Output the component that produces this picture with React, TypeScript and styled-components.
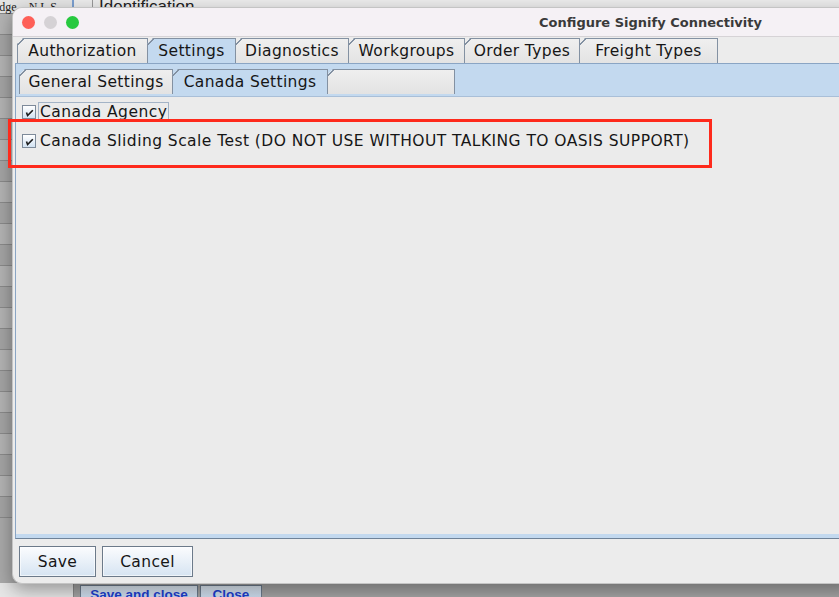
import React from 'react';
import styled, { createGlobalStyle, css } from 'styled-components';

const GlobalStyle = createGlobalStyle`
	html, body {
		margin: 0;
		padding: 0;
		width: 839px;
		height: 597px;
		overflow: hidden;
		background: #dcdcdc;
	}
	* {
		box-sizing: border-box;
	}
`;

const topTabs = [
	{ label: 'Authorization', width: 131 },
	{ label: 'Settings', width: 89, active: true },
	{ label: 'Diagnostics', width: 114 },
	{ label: 'Workgroups', width: 117 },
	{ label: 'Order Types', width: 116 },
	{ label: 'Freight Types', width: 139 },
];

const innerTabs = [
	{ label: 'General Settings', width: 154 },
	{ label: 'Canada Settings', width: 156, active: true },
	{ label: '', width: 128 },
];

const CheckMark = () => (
	<svg width="11" height="11" viewBox="0 0 11 11">
		<path d="M2.5 5.5 L3.6 8.6 L8.8 3.2" fill="none" stroke="#1b1b1b" strokeWidth="1.6" />
	</svg>
);

export default function App() {
	return (
		<>
			<GlobalStyle />
			<Desktop>
				<BackTable>
					<BackHeader>
						<span>idge</span>
						<span>N L S</span>
					</BackHeader>
					{Array.from({ length: 24 }).map((_, i) => (
						<BackRow key={i} />
					))}
				</BackTable>
				<BackMain>
					<BackLegend>Identification</BackLegend>
				</BackMain>
				<BackFooterLeft />
				<BackFooter>
					<BackButton $width={118}>Save and close</BackButton>
					<BackButton $width={62}>Close</BackButton>
				</BackFooter>

				<Window>
					<TitleBar>
						<Lights>
							<Light color="#fe5f57" />
							<Light color="#d5d2d5" />
							<Light color="#27c93f" />
						</Lights>
						<Title>Configure Signify Connectivity</Title>
					</TitleBar>
					<WindowBody>
						<TabRow>
							{topTabs.map((t) => (
								<Tab key={t.label} $width={t.width} $active={!!t.active}>
									{t.label}
								</Tab>
							))}
						</TabRow>
						<OuterPanel>
							<InnerTabRow>
								{innerTabs.map((t, i) => (
									<Tab key={i} $width={t.width} $active={!!t.active}>
										{t.label}
									</Tab>
								))}
							</InnerTabRow>
							<InnerPanel>
								<CheckRow>
									<CheckBox>
										<CheckMark />
									</CheckBox>
									<CheckLabel $focused>Canada Agency</CheckLabel>
								</CheckRow>
								<CheckRow>
									<CheckBox>
										<CheckMark />
									</CheckBox>
									<CheckLabel>
										Canada Sliding Scale Test (DO NOT USE WITHOUT TALKING TO OASIS SUPPORT)
									</CheckLabel>
								</CheckRow>
							</InnerPanel>
						</OuterPanel>
						<ButtonBar>
							<Button $width={77}>Save</Button>
							<Button $width={91}>Cancel</Button>
						</ButtonBar>
					</WindowBody>
				</Window>

				<Highlight />
			</Desktop>
		</>
	);
}

const uiFont = `'DejaVu Sans', 'Noto Sans', sans-serif`;

const Desktop = styled.div`
	position: relative;
	width: 839px;
	height: 597px;
	display: grid;
	grid-template-columns: 74px 1fr;
	grid-template-rows: 1fr 14px;
	background: #dcdcdc;
	overflow: hidden;
`;

const BackTable = styled.div`
	grid-column: 1;
	grid-row: 1;
	display: flex;
	flex-direction: column;
	background: #a9a9a9;
	border-right: 2px solid #7b9fd0;
`;

const BackHeader = styled.div`
	height: 14px;
	display: flex;
	gap: 12px;
	align-items: flex-end;
	background: #e4e4e4;
	font-family: 'Liberation Serif', serif;
	font-size: 12px;
	line-height: 12px;
	color: #222;
	border-bottom: 1px solid #888;
	span:first-child {
		margin-left: -4px;
	}
`;

const BackRow = styled.div`
	height: 21px;
	flex: none;
	border-bottom: 1px solid #8a8a8a;
	background: #b3b3b3;
	&:nth-child(odd) {
		background: #a4a4a4;
	}
`;

const BackMain = styled.div`
	grid-column: 2;
	grid-row: 1;
	background: #ececec;
	padding-left: 18px;
`;

const BackLegend = styled.div`
	font-family: 'Liberation Sans', sans-serif;
	font-size: 17px;
	line-height: 14px;
	color: #222;
	height: 8px;
	overflow: visible;
	border-left: 1px solid #999;
	padding-left: 6px;
`;

const BackFooterLeft = styled.div`
	grid-column: 1;
	grid-row: 2;
	background: #e6e6e6;
	border-right: 1px solid #8a8a8a;
`;

const BackFooter = styled.div`
	grid-column: 2;
	grid-row: 2;
	background: #a3a3a3;
	display: flex;
	align-items: flex-start;
	padding: 2px 0 0 6px;
	gap: 2px;
`;

const BackButton = styled.div<{ $width: number }>`
	width: ${({ $width }) => $width}px;
	height: 20px;
	text-align: center;
	background: linear-gradient(#dfe9f4, #bcd0e6);
	border: 1px solid #6c7b8c;
	font-family: 'Liberation Sans', sans-serif;
	font-size: 13.5px;
	line-height: 18px;
	font-weight: bold;
	color: #1d3fd0;
	text-decoration: underline;
`;

const Window = styled.div`
	position: absolute;
	left: 12px;
	top: 7px;
	width: 840px;
	height: 577px;
	display: flex;
	flex-direction: column;
	border-radius: 10px 0 0 10px;
	border: 1px solid #c4c4c4;
	border-right: none;
	background: #ececec;
	box-shadow: 0 6px 18px rgba(0, 0, 0, 0.35);
	overflow: hidden;
`;

const TitleBar = styled.div`
	height: 29px;
	flex: none;
	display: flex;
	align-items: center;
	background: #f5f1f5;
	border-bottom: 1px solid #d6d3d6;
	position: relative;
`;

const Lights = styled.div`
	display: flex;
	gap: 9px;
	padding-left: 9px;
`;

const Light = styled.span<{ color: string }>`
	width: 13px;
	height: 13px;
	border-radius: 50%;
	background: ${({ color }) => color};
`;

const Title = styled.div`
	margin-left: auto;
	margin-right: 90px;
	font-family: ${uiFont};
	font-size: 13px;
	font-weight: bold;
	color: #3a3a3a;
`;

const WindowBody = styled.div`
	flex: 1;
	display: flex;
	flex-direction: column;
	padding-left: 2px;
`;

const TabRow = styled.div`
	height: 25px;
	flex: none;
	display: flex;
	padding-left: 2px;
	margin-top: 1px;
`;

const Tab = styled.div<{ $width: number; $active: boolean }>(
	({ $width, $active }) => css`
		position: relative;
		width: ${$width}px;
		height: 100%;
		flex: none;
		display: flex;
		align-items: center;
		justify-content: center;
		font-family: ${uiFont};
		font-size: 15.5px;
		letter-spacing: 0.35px;
		color: #161616;
		white-space: nowrap;
		border: 1px solid #8391a2;
		border-bottom: none;
		background: ${$active ? '#c3d9ef' : 'linear-gradient(#efefef, #e3e3e3)'};
		margin-left: -1px;
		z-index: ${$active ? 2 : 1};
		clip-path: polygon(6px 0, 100% 0, 100% 100%, 0 100%, 0 6px);
		&::before {
			content: '';
			position: absolute;
			left: -1px;
			top: -1px;
			width: 8px;
			height: 8px;
			background: linear-gradient(
				to bottom right,
				transparent calc(50% - 1px),
				#8391a2 calc(50% - 1px),
				#8391a2 calc(50% + 0.2px),
				transparent calc(50% + 0.2px)
			);
		}
		&:first-child {
			margin-left: 0;
		}
	`,
);

const OuterPanel = styled.div`
	height: 476px;
	flex: none;
	display: flex;
	flex-direction: column;
	background: #c3d9ef;
	border-top: 1px solid #8aa5c4;
	border-left: 1px solid #8aa5c4;
	padding: 5px 0 4px 3px;
	border-bottom: 1px solid #6f8399;
`;

const InnerTabRow = styled.div`
	height: 25px;
	flex: none;
	display: flex;
	padding-left: 0;
`;

const InnerPanel = styled.div`
	flex: 1;
	display: flex;
	flex-direction: column;
	gap: 9px;
	margin-top: 2px;
	margin-left: -3px;
	background: #ebebeb;
	border-top: 1px solid #a9bfd8;
	padding: 5px 0 0 6px;
`;

const CheckRow = styled.div`
	display: flex;
	align-items: center;
	gap: 2px;
	height: 20px;
`;

const CheckBox = styled.span`
	width: 14px;
	height: 14px;
	display: flex;
	align-items: center;
	justify-content: center;
	border: 1px solid #7d8a9a;
	background: linear-gradient(#ffffff, #d2e2f2);
`;

const CheckLabel = styled.span<{ $focused?: boolean }>`
	font-family: ${uiFont};
	font-size: 15.5px;
	letter-spacing: 0.45px;
	color: #161616;
	white-space: nowrap;
	padding: 0 1px;
	height: 20px;
	line-height: 19px;
	border: 1px solid ${({ $focused }) => ($focused ? '#a3b3c6' : 'transparent')};
`;

const ButtonBar = styled.div`
	flex: 1;
	display: flex;
	gap: 6px;
	padding: 7px 0 0 4px;
`;

const Button = styled.div<{ $width: number }>`
	width: ${({ $width }) => $width}px;
	height: 31px;
	display: flex;
	align-items: center;
	justify-content: center;
	font-family: ${uiFont};
	font-size: 15.5px;
	letter-spacing: 0.35px;
	color: #161616;
	border: 1px solid #6c7a8a;
	background: linear-gradient(#fbfcfe, #d6e4f2);
	box-shadow: inset 0 0 0 1px rgba(255, 255, 255, 0.6);
`;

const Highlight = styled.div`
	position: absolute;
	left: 8px;
	top: 119px;
	width: 704px;
	height: 49px;
	border: 3px solid #fe2a1c;
	z-index: 5;
	pointer-events: none;
`;
